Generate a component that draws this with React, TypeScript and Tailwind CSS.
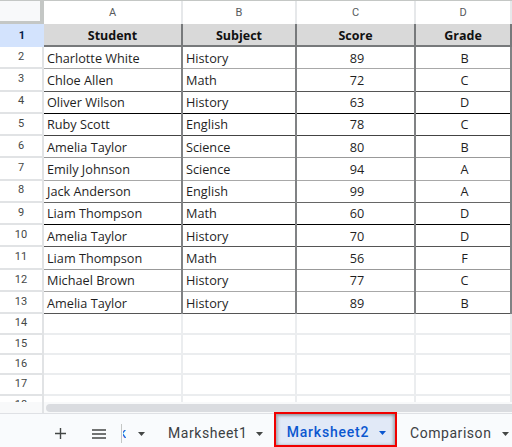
const rows = [
  ["Charlotte White", "History", "89", "B"],
  ["Chloe Allen", "Math", "72", "C"],
  ["Oliver Wilson", "History", "63", "D"],
  ["Ruby Scott", "English", "78", "C"],
  ["Amelia Taylor", "Science", "80", "B"],
  ["Emily Johnson", "Science", "94", "A"],
  ["Jack Anderson", "English", "99", "A"],
  ["Liam Thompson", "Math", "60", "D"],
  ["Amelia Taylor", "History", "70", "D"],
  ["Liam Thompson", "Math", "56", "F"],
  ["Michael Brown", "History", "77", "C"],
  ["Amelia Taylor", "History", "89", "B"],
];

// the screenshot was scaled, so the row rules come out in different greys
const rowLines = [
  "border-[#a8a8a8]",
  "border-[#555555]",
  "border-black",
  "border-[#444444]",
  "border-[#999999]",
  "border-[#a8a8a8]",
  "border-[#666666]",
  "border-black",
  "border-[#555555]",
  "border-[#999999]",
  "border-[#a8a8a8]",
  "border-[#555555]",
];

const cols = ["w-[139px]", "w-[114px]", "w-[119px]", "w-[96px]"];
const heads = ["A", "B", "C", "D"];

function Caret({ className }: { className: string }) {
  return (
    <svg viewBox="0 0 7 4" className={`h-1 w-[7px] shrink-0 ${className}`}>
      <path d="M0 0h7L3.5 4z" fill="currentColor" />
    </svg>
  );
}

export default function App() {
  return (
    <div className="flex h-[447px] w-[512px] flex-col overflow-hidden bg-white font-['Open_Sans',sans-serif]">
      <div className="h-[402px] shrink-0 overflow-hidden">
        <div className="flex h-6 border-t border-[#c4c7c5]">
          <div className="h-[23px] w-11 shrink-0 border-r-4 border-b-[3px] border-[#c4c7c5] bg-[#f8f9fa]" />
          {heads.map((h, i) => (
            <div
              key={h}
              className={`${cols[i]} flex shrink-0 items-center justify-center border-r-2 border-[#e6e8ea] pt-px font-['Roboto',sans-serif] text-[11px] text-[#575a5c]`}
            >
              {h}
            </div>
          ))}
        </div>

        <div className="flex h-[23px]">
          <div className="flex w-11 shrink-0 items-center justify-center bg-[#d3e3fd] pt-[2px] font-['Roboto',sans-serif] text-[11px] font-bold text-[#041e49]">
            1
          </div>
          {["Student", "Subject", "Score", "Grade"].map((h, i) => (
            <div
              key={h}
              className={`${cols[i]} flex shrink-0 items-center justify-center border-r-2 border-b-2 border-[#77797b] bg-[#d9d9d9] pt-[3px] text-[12.5px] font-bold text-[#111111]`}
            >
              {h}
            </div>
          ))}
        </div>

        {rows.map((r, i) => (
          <div key={i} className="flex h-[22.27px]">
            <div className="flex w-11 shrink-0 items-center justify-center border-r-2 border-b-2 border-[#e1e3e5] font-['Roboto',sans-serif] text-[11px] text-[#444746]">
              {i + 2}
            </div>
            {r.map((v, j) => (
              <div
                key={j}
                className={`${cols[j]} ${rowLines[i]} flex shrink-0 items-center border-b px-[3px] pt-px text-[12.7px] text-[#1f1f1f] ${j > 1 ? "justify-center" : ""}`}
              >
                <span className="grow text-inherit" style={{ textAlign: j > 1 ? "center" : "left" }}>
                  {v}
                </span>
                <span className="-mr-[3px] h-[22.27px] w-0.5 shrink-0 bg-[#808284]" />
              </div>
            ))}
          </div>
        ))}

        {[14, 15, 16, 17, 18].map((n) => (
          <div key={n} className="flex h-[20.4px]">
            <div className="flex w-11 shrink-0 items-center justify-center border-r-2 border-b-2 border-[#e1e3e5] font-['Roboto',sans-serif] text-[11px] text-[#444746]">
              {n}
            </div>
            {cols.map((w) => (
              <div key={w} className={`${w} shrink-0 border-r-2 border-b-2 border-[#ebedef]`} />
            ))}
          </div>
        ))}
      </div>

      <div className="flex h-3 shrink-0 border-b border-[#dfe1e5] bg-[#f8f9fa]">
        <div className="w-11 shrink-0 border-r-2 border-[#e1e3e5]" />
        <div className="mt-0.5 ml-[2px] h-2 flex-1 rounded-l bg-[#dadce0]" />
      </div>

      <div className="flex h-[33px] shrink-0 items-center bg-[#f9fbfd] pt-[6px] font-['Roboto',sans-serif] text-[14px] tracking-[0.55px] text-[#3c4043]">
        <svg viewBox="0 0 11 11" className="ml-[55px] size-[11px] shrink-0 text-[#444746]">
          <path d="M0 5.5h11M5.5 0v11" stroke="currentColor" strokeWidth="1.4" />
        </svg>
        <svg viewBox="0 0 14 10" className="ml-[26px] h-2.5 w-3.5 shrink-0 text-[#444746]">
          <path d="M0 1h14M0 5h14M0 9h14" stroke="currentColor" strokeWidth="1.4" />
        </svg>
        <div className="ml-[15px] h-[19px] w-px shrink-0 bg-[#c4c7c5]" />
        <div className="ml-px w-[3px] shrink-0 overflow-hidden text-[#0b57d0]">
          <span className="-ml-1 block">k</span>
        </div>
        <Caret className="ml-[12px] text-[#444746]" />
        <span className="ml-[23px] w-[78px] shrink-0">Marksheet1</span>
        <Caret className="ml-[10px] text-[#444746]" />
        <div className="ml-[11px] flex h-[35px] w-[123px] shrink-0 items-center justify-center gap-[10px] self-end border-2 border-[#f00000] bg-[#e1e9f7] pt-[6px] pl-[2px] font-medium tracking-[0.8px] text-[#0b57d0] shadow-[inset_2px_2px_3px_rgba(60,64,67,0.35),inset_-2px_0_3px_rgba(60,64,67,0.35)]">
          <span>Marksheet2</span>
          <Caret className="text-[#0b57d0]" />
        </div>
        <span className="ml-[13px] w-[81px] shrink-0">Comparison</span>
        <Caret className="ml-[11px] text-[#444746]" />
      </div>
    </div>
  );
}
